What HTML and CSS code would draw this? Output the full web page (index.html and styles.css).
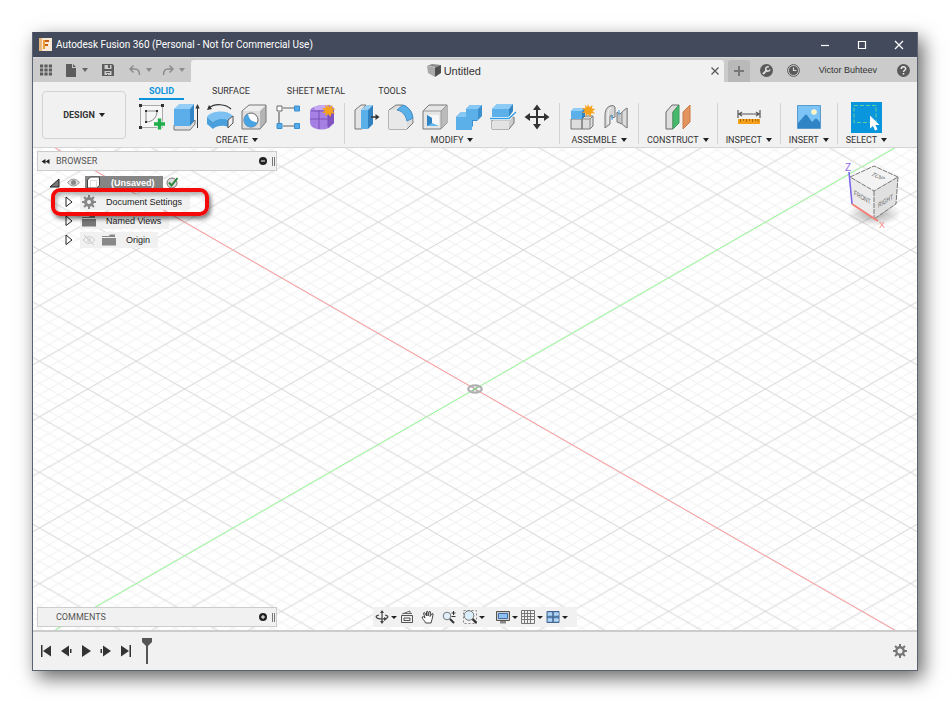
FILE: index.html
```html
<!DOCTYPE html>
<html lang="en">
<head>
<meta charset="utf-8">
<title>Autodesk Fusion 360</title>
<link rel="stylesheet" href="styles.css">
</head>
<body>
<div class="window">
  <header class="titlebar">
    <svg class="app-logo" width="13" height="13" viewBox="0 0 13 13"><path fill="#f8ead6" d="M0 0h13v13H0z"/><path fill="#e8b77c" d="M0 0h3v13H0z"/><path fill="#c8600f" d="M4 2h6v2H6v2h3v2H6v3H4z"/><path fill="#f09b3c" d="M4 2h2v9H4z"/></svg>
    <span class="app-title">Autodesk Fusion 360 (Personal - Not for Commercial Use)</span>
    <div class="window-buttons">
      <button aria-label="Minimize"><svg width="10" height="10" viewBox="0 0 10 10"><path d="M1 5.500h8" class="wb"/></svg></button>
      <button aria-label="Maximize"><svg width="10" height="10" viewBox="0 0 10 10"><path d="M1.500 1.500h7v7h-7z" class="wb"/></svg></button>
      <button aria-label="Close"><svg width="10" height="10" viewBox="0 0 10 10"><path d="M1 1l8 8M9 1l-8 8" class="wb"/></svg></button>
    </div>
  </header>

  <div class="tabbar">
    <div class="quick">
      <button aria-label="Data panel"><svg width="12" height="12" viewBox="0 0 12 12" fill="#5c5c5c"><path d="M0 .5h3.200v3H0zM4.400.5h3.200v3H4.400zM8.800.5H12v3H8.800zM0 4.500h3.200v3H0zM4.400 4.500h3.200v3H4.400zM8.800 4.500H12v3H8.800zM0 8.500h3.200v3H0zM4.400 8.500h3.200v3H4.400zM8.800 8.500H12v3H8.800z"/></svg></button>
      <button class="file" aria-label="File"><svg width="12" height="13" viewBox="0 0 12 13" fill="#5c5c5c"><path d="M1 0h6v4h4v9H1zM8 0l3 3H8z"/></svg><i class="caret grey"></i></button>
      <button class="save" aria-label="Save"><svg width="12" height="12" viewBox="0 0 12 12"><path fill="#5c5c5c" fill-rule="evenodd" d="M0 0h10.500L12 1.500V12H0zM2.500 1v4h7V1zM2.500 7v4h7V7z"/><path fill="#5c5c5c" d="M6 1h2v3H6zM4 8h4v1H4zM5 10h1v1H5z"/></svg></button>
      <button aria-label="Undo"><svg width="12" height="12" viewBox="0 0 12 12" fill="none" stroke="#8c8c8c" stroke-width="1.500"><path d="M4.500 1.500L1 5l3.500 3.500M1 5h5c3 0 4.500 1.500 4.500 6"/></svg><i class="caret pale"></i></button>
      <button aria-label="Redo"><svg width="12" height="12" viewBox="0 0 12 12" fill="none" stroke="#8c8c8c" stroke-width="1.500"><path d="M7.500 1.500L11 5 7.500 8.500M11 5H6C3 5 1.500 6.500 1.500 11"/></svg><i class="caret pale"></i></button>
    </div>
    <div class="doc-tab">
      <span class="doc-name"><svg width="14" height="13" viewBox="0 0 14 13"><path fill="#8b8b8b" d="M0 2l5-2 9 1-5 2z"/><path fill="#a9a9a9" d="M0 2l8 1.500V13L1 9z"/><path fill="#4e4e4e" d="M8 3.500L14 1v8l-6 4z"/></svg>Untitled</span>
      <button class="doc-close" aria-label="Close document"><svg width="8" height="8" viewBox="0 0 8 8"><path d="M.5.5l7 7M7.500.5l-7 7" stroke="#555" stroke-width="1.200"/></svg></button>
    </div>
    <div class="account">
      <button class="new-tab" aria-label="New tab"><svg width="12" height="12" viewBox="0 0 12 12"><path d="M6 1v10M1 6h10" stroke="#777" stroke-width="2"/></svg></button>
      <button aria-label="Extensions"><svg width="13" height="13" viewBox="0 0 13 13"><circle cx="6.500" cy="6.500" r="6.500" fill="#5a5a5a"/><path d="M3 10l4-4" stroke="#ddd" stroke-width="2"/><path d="M8.800 3A2.200 2.200 0 1 0 10 5.500" stroke="#ddd" stroke-width="1.500" fill="none"/></svg></button>
      <button aria-label="Job status"><svg width="13" height="13" viewBox="0 0 13 13"><circle cx="6.500" cy="6.500" r="5.900" fill="none" stroke="#5a5a5a"/><circle cx="6.500" cy="6.500" r="4.600" fill="#5a5a5a"/><path d="M6.500 3.500v3h3" stroke="#ddd" stroke-width="1.200" fill="none"/></svg></button>
      <button class="user">Victor Buhteev</button>
      <button aria-label="Help"><svg width="13" height="13" viewBox="0 0 13 13"><circle cx="6.500" cy="6.500" r="6.500" fill="#5a5a5a"/><path d="M4.300 5c0-3 4.400-2.800 4.400-.3 0 1.500-2.200 1.600-2.200 3.300M6.500 9v1.600" stroke="#eee" stroke-width="1.500" fill="none"/></svg></button>
    </div>
  </div>

  <div class="ribbon">
    <button class="workspace">DESIGN<i class="caret"></i></button>
    <div class="ribbon-main">
      <nav class="ribbon-tabs">
        <a href="#solid" class="active">SOLID</a>
        <a href="#surface" class="surface">SURFACE</a>
        <a href="#sheet">SHEET METAL</a>
        <a href="#tools">TOOLS</a>
      </nav>
      <div class="groups">
        <section class="group">
          <div class="tools">
            <button aria-label="Create sketch"><svg class="ic" viewBox="0 0 28 28"><path d="M2.500 2.500h22v22h-22z" fill="#f6f6f6" stroke="#aaa"/><path d="M8 8h11c0 6-4 11-11 11z" fill="none" stroke="#888"/><path fill="#333" d="M1 1h3v3H1zM23 1h3v3h-3zM1 23h3v3H1zM7 7h2v2H7zM18 7h2v2h-2zM7 18h2v2H7z"/><path d="M21.500 15.500v11M16 21h11" stroke="#f1f1f1" stroke-width="5"/><path d="M21.500 15.500v11M16 21h11" stroke="#1fae4b" stroke-width="3.400"/></svg></button>
            <button aria-label="Extrude"><svg class="ic" viewBox="0 0 28 28"><path d="M2 22h16l5-5v4l-5 6H2z" fill="#ddd" stroke="#777"/><path d="M2 6l5-5h15l-4 5z" fill="#94cdf6"/><path d="M2 6h16v17H2z" fill="#5baee9"/><path d="M18 6l4-5v17l-4 5z" fill="#3487c6"/><path d="M25.500 25V4" stroke="#333"/><path d="M23.300 5.500L25.500 1l2.200 4.500z" fill="#333"/></svg></button>
            <button aria-label="Revolve"><svg class="ic" viewBox="0 0 28 28"><path d="M3 5c6-5 17-4 22 1" fill="none" stroke="#333" stroke-width="1.200"/><path d="M1 7l2-5 3 4z" fill="#333"/><path d="M1 14c3-6 20-8 26-1l-5 4c-4-2-11-2-15 2z" fill="#7cc1f2"/><path d="M1 14l6 5v7l-6-5zM7 19c4-4 11-4 15-2v7c-4-2-11-2-15 2z" fill="#4a9fdd"/><path d="M22 17l5-4v7l-5 5z" fill="#eee" stroke="#555"/></svg></button>
            <button aria-label="Hole"><svg class="ic" viewBox="0 0 28 28"><path d="M2 8l7-6h17l-6 6z" fill="#eee"/><path d="M20 8l6-6v17l-6 7z" fill="#b5b5b5"/><path d="M2 8h18v18H2z" fill="#ddd"/><path d="M2 8l7-6h17v17l-6 7H2z" fill="none" stroke="#777"/><circle cx="11" cy="17" r="7" fill="#fff" stroke="#666"/><path d="M8 10.800a7 7 0 1 0 9.500 8.500Q9 19 8 10.800z" fill="#4aa3e2"/></svg></button>
            <button aria-label="Pattern"><svg class="ic" viewBox="0 0 28 28"><path d="M9 5h11M5 9v11M9 23h11" stroke="#666" stroke-width="1.200"/><path d="M3 3h5v5H3z" fill="#fff" stroke="#666"/><path fill="#55aceb" stroke="#3b8fcf" d="M20.500 3h5v5h-5zM3 20.500h5v5H3zM20.500 20.500h5v5h-5z"/></svg></button>
            <button aria-label="Create form"><svg class="ic" viewBox="0 0 28 28"><path d="M2 9q0-4 4-5l6-2h10l4 3v15l-5 5q-8 3-15 0-4-2-4-6z" fill="#a680e3"/><path d="M6 4.500L12 2h9l-3 5H7z" fill="#c5a7f2"/><path d="M20 9l6-3v14l-6 5z" fill="#8256c2"/><path d="M11 7v19M2 16h18l6-3M20 9v15M3 8h17" fill="none" stroke="#7a50b8"/><path fill="#f7a21b" d="M20 1l1.400 3.300L24.500 2l-.6 3.600L27.500 6l-3 2 2.500 2.600-3.600-.4L22.500 14 20 11l-2.600 2.500.1-3.700L14 10l2.700-2.500L14 5l3.500.2L17 1.800 19.200 4z"/></svg></button>
          </div>
          <button class="label">CREATE<i class="caret"></i></button>
        </section>
        <section class="group">
          <div class="tools">
            <button aria-label="Press pull"><svg class="ic" viewBox="0 0 28 28"><path d="M2 7l6-5h5L9 7v19H2z" fill="#e4e4e4" stroke="#777"/><path d="M8 7h7v19H8z" fill="#5cb0ea"/><path d="M8 7l6-5h6l-5 5z" fill="#95cff7"/><path d="M15 7l5-5v19l-5 5z" fill="#2f81c0"/><path d="M18 14h6" stroke="#333" stroke-width="1.500"/><path d="M22.500 11l4 3-4 3z" fill="#333"/></svg></button>
            <button aria-label="Fillet"><svg class="ic" viewBox="0 0 28 28"><path d="M2 7l7-5h6c8 2 11 8 11 18l-6 6H2z" fill="#ddd" stroke="#777"/><path d="M2 7h8c6 2 9 8 10 13v6H2z" fill="#e8e8e8"/><path d="M10 7l6-5c6 2 9 7 10 13l-6 3c-1-5-4-10-10-11z" fill="#5cb0ea" stroke="#3c8fcd"/></svg></button>
            <button aria-label="Shell"><svg class="ic" viewBox="0 0 28 28"><path d="M2 8l6-6h18v18l-6 6H2z" fill="#e5e5e5" stroke="#777"/><path d="M20 8l6-6v18l-6 6z" fill="#bbb"/><path d="M2 8h18v18M20 8l6-6" fill="none" stroke="#999"/><path d="M6 12h12v11H6z" fill="#f7f7f7"/><path d="M6 12l5 3v5l7 3H6z" fill="#62b5ed"/><path d="M6 12l5 3v5l-5 3z" fill="#2f82c0"/></svg></button>
            <button aria-label="Combine"><svg class="ic" viewBox="0 0 28 28"><path d="M1 14l5-5h5V6l4-4h12v11l-5 5h-4v5l-4 4H1z" fill="#3c90d0"/><path d="M1 14h10V6h12v11h-6v10H1z" fill="#5cb0ea"/><path d="M11 6l4-4h12l-4 4zM1 14l5-5h5v5z" fill="#88c8f4"/></svg></button>
            <button aria-label="Split body"><svg class="ic" viewBox="0 0 28 28"><path d="M3 17l4-3h18v6l-5 6H3z" fill="#ccc" stroke="#777"/><path d="M3 18h17v8H3z" fill="#e3e3e3"/><path d="M3 6l5-5h16l-4 5v8H3z" fill="#5cb0ea"/><path d="M3 6l5-5h16l-4 5z" fill="#8ccbf5"/><path d="M20 6l4-5v7l-4 6z" fill="#3487c6"/><path d="M1 15.500h19L27 9" fill="none" stroke="#fff" stroke-width="3"/><path d="M1 15.500h19L27 9" fill="none" stroke="#319be2" stroke-width="1.400"/></svg></button>
            <button aria-label="Move"><svg class="ic" viewBox="0 0 28 28"><path d="M14 5v18M5 14h18" stroke="#333" stroke-width="2"/><path fill="#333" d="M14 1.500l4 5.500h-8zM14 26.500l4-5.500h-8zM1.500 14L7 10v8zM26.500 14L21 10v8z"/></svg></button>
          </div>
          <button class="label">MODIFY<i class="caret"></i></button>
        </section>
        <section class="group">
          <div class="tools">
            <button aria-label="New component"><svg class="ic" viewBox="0 0 28 28"><path d="M3 16h11v10H3zM14 16l3-3h8v10l-3 3h-8z" fill="#ddd" stroke="#777"/><path d="M14 16h8v10M22 16l3-3" fill="none" stroke="#888"/><path d="M3 8l3-3h11l-3 3v8H3z" fill="#5cb0ea"/><path d="M3 8l3-3h11l-3 3z" fill="#91cdf6"/><path d="M14 8l3-3v8l-3 3z" fill="#3487c6"/><path fill="#f7a21b" d="M20 1l1.400 3.300L24.500 2l-.6 3.600L27.500 6l-3 2 2.500 2.600-3.600-.4L22.500 14 20 11l-2.600 2.500.1-3.700L14 10l2.700-2.500L14 5l3.500.2L17 1.800 19.200 4z"/></svg></button>
            <button aria-label="Joint"><svg class="ic" viewBox="0 0 28 28"><path d="M3 13c0-6 2-9 5-10l3-.5 2 1.500v10l-3 1v-3l-2 1v8l-5 4z" fill="#d5d5d5" stroke="#777"/><path d="M6 21V11c0-3 1-5 3-6" fill="none" stroke="#fff"/><path d="M15 9l3 2 2-2 5-4v20l-5-4-5-2z" fill="#c5c5c5" stroke="#777"/><path d="M20 9l5-4v20l-5-4z" fill="#ddd" stroke="#888"/><path d="M10 12v5M17 7v5" stroke="#3fa9ee"/></svg></button>
          </div>
          <button class="label">ASSEMBLE<i class="caret"></i></button>
        </section>
        <section class="group">
          <div class="tools"><button aria-label="Construct"><svg class="ic" viewBox="0 0 28 28"><path d="M2 9l6-7h7l-6 7v17H2z" fill="#ddd" stroke="#666"/><path d="M9 9l6-7v18l-6 6z" fill="#47b96c" stroke="#3c9b5b"/><path d="M19 9l7-7v17l-7 7z" fill="#e3935d" stroke="#ca7b46"/></svg></button></div>
          <button class="label">CONSTRUCT<i class="caret"></i></button>
        </section>
        <section class="group">
          <div class="tools"><button aria-label="Measure"><svg class="ic" viewBox="0 0 28 28"><path d="M3 7v8M25 7v8M4 11h20M7 9l-3 2 3 2M21 9l3 2-3 2" fill="none" stroke="#555" stroke-width="1.200"/><path d="M3 16h22v5H3z" fill="#f6a01a"/><path d="M5.500 16v3M8.500 16v2M11.500 16v3M14.500 16v2M17.500 16v3M20.500 16v2M23 16v3" stroke="#a86a00"/></svg></button></div>
          <button class="label">INSPECT<i class="caret"></i></button>
        </section>
        <section class="group">
          <div class="tools"><button aria-label="Insert image"><svg class="ic" viewBox="0 0 28 28"><path d="M2.500 2.500h23v23h-23z" fill="#7cc3f6" stroke="#5a9bcd"/><circle cx="19" cy="9" r="2.800" fill="#fff5c8"/><path d="M3 20l7-8q1-1 2 0l5 7 3-3q1-1 2 0l3 3v6H3z" fill="#2f84c6"/></svg></button></div>
          <button class="label">INSERT<i class="caret"></i></button>
        </section>
        <section class="group">
          <div class="tools"><button class="selected" aria-label="Select"><svg width="31" height="31" viewBox="0 0 31 31"><path d="M3 3.500h22v17H3z" fill="none" stroke="#61cfa0" stroke-dasharray="4 2"/><path fill="#fff" d="M19 13.500v13l3-2.500 2 4.500 2.500-1-2-4.500h4z"/></svg></button></div>
          <button class="label">SELECT<i class="caret"></i></button>
        </section>
      </div>
    </div>
  </div>

  <main class="canvas">
    <svg class="grid" width="100%" height="100%" aria-hidden="true">
      <defs>
        <pattern id="iso" width="96.800" height="55.600" patternUnits="userSpaceOnUse">
          <path fill="none" stroke="#f1f1f1" d="M0-44.480l96.800 55.600M0-33.360l96.800 55.600M0-22.240l96.800 55.600M0-11.120l96.800 55.600M0 11.120l96.800 55.600M0 22.240l96.800 55.600M0 33.360l96.800 55.600M0 44.480l96.800 55.600M0 11.120l96.800-55.600M0 22.240l96.800-55.600M0 33.360l96.800-55.600M0 44.480l96.800-55.600M0 66.720l96.800-55.600M0 77.840l96.800-55.600M0 88.960l96.800-55.600M0 100.080l96.800-55.600"/>
          <path fill="none" stroke="#d5d5d5" d="M-96.800-55.600l290.400 166.800M-96.800 111.200L193.600-55.600M-10 5.740L10-5.740M86.800 61.340l20-11.480M86.800-5.740l20 11.480M-10 49.860l20 11.480"/>
        </pattern>
      </defs>
      <svg x="50%" y="50%" overflow="visible">
        <rect x="-1936" y="-1112" width="3872" height="2224" fill="url(#iso)"/>
        <path d="M-1936-1112L1936 1112" stroke="#ff9c9c"/>
        <path d="M-1936 1112L1936-1112" stroke="#98ff98"/>
        <ellipse rx="6.800" ry="3.600" fill="none" stroke="#b0b0b0" stroke-width="2.200"/>
        <path d="M-3-2.500L3 2.500M-3 2.500L3-2.500" stroke="#b0b0b0" stroke-width="1.600"/>
        <path d="M-3 1.700L3-1.700" stroke="#7fdc7f"/>
      </svg>
    </svg>

    <div class="panel">
      <button aria-label="Collapse"><svg width="9" height="7" viewBox="0 0 9 7"><path d="M4.500 1v5L.5 3.500zM8.500 1v5l-4-2.500z" fill="#222"/></svg></button>
      <span class="panel-title">BROWSER</span>
      <button class="round" aria-label="Hide"><svg width="8" height="8" viewBox="0 0 8 8"><circle cx="4" cy="4" r="4" fill="#222"/><path d="M2 4h4" stroke="#fff"/></svg></button>
      <i class="grip"></i>
    </div>

    <ul class="tree">
      <li class="row root">
        <svg width="11" height="10" viewBox="0 0 11 10"><path d="M10 1v8H1z" fill="#777" stroke="#222"/></svg>
        <svg class="eye" width="13" height="9" viewBox="0 0 13 9"><path d="M.5 4.500q6-7 12 0-6 7-12 0z" fill="#ddd" stroke="#999"/><circle cx="6.500" cy="4.500" r="2.500" fill="#888"/></svg>
        <span class="doc"><svg width="16" height="13" viewBox="0 0 16 13"><path d="M2.500 12V4l3-3h9v8.500l-3 2.500z" fill="#fff" stroke="#444"/><path d="M5.500 11V4.500h6V11M11.500 4.500L14 2" fill="none" stroke="#ddd"/></svg>(Unsaved)</span>
        <svg class="ok" width="13" height="13" viewBox="0 0 13 13"><circle cx="6" cy="7" r="5" fill="#ddd" stroke="#777"/><path d="M3 6.500L5.500 9.500 11.500 2" stroke="#27853b" stroke-width="2" fill="none"/></svg>
      </li>
      <li class="row child"><svg class="twist" width="8" height="12" viewBox="0 0 8 12"><path d="M1 1v9.500L7 6z" fill="#fff" stroke="#222"/></svg><span class="cell"><svg width="14" height="14" viewBox="0 0 14 14"><circle cx="7" cy="7" r="3.500" fill="none" stroke="#888" stroke-width="3"/><path d="M7 0v3M7 11v3M0 7h3M11 7h3M2.050 2.050l2 2M9.950 9.950l2 2M11.950 2.050l-2 2M4.050 9.950l-2 2" stroke="#888" stroke-width="2"/></svg><span>Document Settings</span></span></li>
      <li class="row child"><svg class="twist" width="8" height="12" viewBox="0 0 8 12"><path d="M1 1v9.500L7 6z" fill="#fff" stroke="#222"/></svg><span class="cell"><svg width="14" height="14" viewBox="0 0 14 14"><path d="M0 3h7l1-1.500h5V4H0zM0 5h14v7.500H0z" fill="#777"/></svg><span>Named Views</span></span></li>
      <li class="row child"><svg class="twist" width="8" height="12" viewBox="0 0 8 12"><path d="M1 1v9.500L7 6z" fill="#fff" stroke="#222"/></svg><span class="cell"><svg width="14" height="14" viewBox="0 0 14 14"><path d="M1 7q6-7 12 0-6 7-12 0zM2 2l10 10" fill="none" stroke="#ccc"/><circle cx="7" cy="7" r="2" fill="#d5d5d5"/></svg><svg class="second" width="14" height="14" viewBox="0 0 14 14"><path d="M0 3h7l1-1.500h5V4H0zM0 5h14v7.500H0z" fill="#888"/></svg><span>Origin</span></span></li>
    </ul>
    <div class="callout"></div>

    <svg class="cube" width="64" height="72" viewBox="0 0 64 72" font-family="Liberation Sans, sans-serif">
      <defs><radialGradient id="shade"><stop offset="0" stop-color="#000" stop-opacity=".35"/><stop offset="1" stop-color="#000" stop-opacity="0"/></radialGradient></defs>
      <ellipse cx="31" cy="54" rx="27" ry="12" fill="url(#shade)"/>
      <path d="M7 17L31 6l24 11-24 14z" fill="#f3f3f3"/><path d="M7 17l24 14v28L9 44z" fill="#ebebeb"/><path d="M31 31l24-14-2 27-22 15z" fill="#e0e0e0"/>
      <path d="M7 17L31 6l24 11-24 14zM31 31v28M55 17l-2 27-22 15" fill="none" stroke="#777" stroke-dasharray="5 1"/>
      <path d="M6 12l3 32" stroke="#7a68e8" stroke-width="1.600"/><path d="M9 44l26 17" stroke="#f77b72" stroke-width="1.600"/>
      <text x="2" y="11" font-size="10" fill="#8c6be8">Z</text><text x="36" y="68" font-size="9" fill="#f78a80">X</text>
      <g font-size="6" fill="#666"><text transform="matrix(.8 .46 0 1.200 11 35)">FRONT</text><text transform="matrix(.8 -.5 0 1.200 35 48)">RIGHT</text><text transform="matrix(1 .45 -.9 .6 27 15)">TOP</text></g>
    </svg>

    <div class="canvas-foot">
      <div class="panel comments">
        <span class="panel-title">COMMENTS</span>
        <button class="round" aria-label="Add comment"><svg width="8" height="8" viewBox="0 0 8 8"><circle cx="4" cy="4" r="4" fill="#222"/><path d="M2 4h4M4 2v4" stroke="#fff"/></svg></button>
        <i class="grip"></i>
      </div>
      <div class="navbar">
        <button aria-label="Orbit"><svg width="14" height="14" viewBox="0 0 14 14"><path d="M7 1v12M10 5c5 1 3 4-3 4S-1 6 4 5" fill="none" stroke="#444" stroke-width="1.200"/><path d="M7 0l2 3H5zM7 14l2-3H5z" fill="#444"/><path d="M9 7l3 2-3 2z" fill="#444"/></svg><i class="caret"></i></button>
        <button aria-label="Look at"><svg width="14" height="14" viewBox="0 0 14 14"><path d="M1.500 5.500h11v7h-11zM4 8h6v2.500H4z" fill="#eee" stroke="#555"/><path d="M2 4l8-3v3M3 3.500h9" fill="none" stroke="#666"/></svg></button>
        <button aria-label="Pan"><svg width="14" height="14" viewBox="0 0 14 14"><path d="M4.500 13C4 10.500 1 9 1 7q1.500-1 3 1L2.500 3Q3 2 4 3l1.500 3V2q1-2 1.500 0v4l1-4q1-1.500 1.500 0L9 6.500 11 3.500q1.500 0 1 1.500L11 9.500l-1 3.500z" fill="#fff" stroke="#444"/></svg></button>
        <button aria-label="Zoom"><svg width="14" height="14" viewBox="0 0 14 14"><circle cx="5" cy="6" r="3.800" fill="#e0effa" stroke="#777"/><path d="M8 9l4 4" stroke="#333" stroke-width="2"/><path d="M9.500 3h4M11.500 1v4M9.500 6.500h4" stroke="#333"/></svg></button>
        <button aria-label="Fit"><svg width="14" height="14" viewBox="0 0 14 14"><path d="M.5.500h13v13H.5z" fill="none" stroke="#888" stroke-dasharray="2 2"/><circle cx="6" cy="5.500" r="4.800" fill="#dceefa" stroke="#777"/><path d="M9.500 9l4 4" stroke="#333" stroke-width="2.400"/></svg><i class="caret"></i></button>
        <button class="display" aria-label="Display settings"><svg width="14" height="14" viewBox="0 0 14 14"><path d="M.5 1.500h13v9H.5z" fill="#ccc" stroke="#555"/><path d="M2.500 3.500h9v5h-9z" fill="#8fc0ee" stroke="#3e6fae"/><path d="M4 11h6v2.500H4z" fill="#888"/></svg><i class="caret"></i></button>
        <button aria-label="Grid and snaps"><svg width="14" height="14" viewBox="0 0 14 14"><path d="M.5.500h13v13H.5zM.5 3.500h13M.5 6.500h13M.5 9.500h13M3.500.500v13M6.500.500v13M9.500.500v13" fill="none" stroke="#777"/></svg><i class="caret"></i></button>
        <button aria-label="Viewports"><svg width="14" height="14" viewBox="0 0 14 14"><path d="M1 1.500h12v11H1z" fill="#8fbdea" stroke="#45658e"/><path d="M7 1.500v11M1 7h12" stroke="#45658e" stroke-width="1.500"/><path d="M2 4h4M8 4h5M2 10h4M8 10h5" stroke="#d4e7f8"/></svg><i class="caret"></i></button>
      </div>
    </div>
  </main>

  <footer class="timeline">
    <button aria-label="Go to start"><svg width="12" height="12" viewBox="0 0 12 12" fill="#333"><path d="M1 0h1.500v12H1zM11 .5v11L3 6z"/></svg></button>
    <button aria-label="Step back"><svg width="12" height="12" viewBox="0 0 12 12" fill="#333"><path d="M9 .5v11L1 6zM10 4h1.500v4H10z"/></svg></button>
    <button aria-label="Play"><svg width="12" height="12" viewBox="0 0 12 12" fill="#333"><path d="M2 0v12l9-6z"/></svg></button>
    <button aria-label="Step forward"><svg width="12" height="12" viewBox="0 0 12 12" fill="#333"><path d="M3 .5v11L11 6zM.5 4H2v4H.5z"/></svg></button>
    <button aria-label="Go to end"><svg width="12" height="12" viewBox="0 0 12 12" fill="#333"><path d="M1 .5v11L9 6zM9.500 0H11v12H9.500z"/></svg></button>
    <svg class="marker" width="10" height="26" viewBox="0 0 10 26"><path d="M0 0h10v4L6 8v18H4V8L0 4z" fill="#555"/></svg>
    <button class="prefs" aria-label="Preferences"><svg width="14" height="14" viewBox="0 0 14 14"><circle cx="7" cy="7" r="3.700" fill="none" stroke="#777" stroke-width="2.400"/><path d="M7 0v3M7 11v3M0 7h3M11 7h3M2.050 2.050l2 2M9.950 9.950l2 2M11.950 2.050l-2 2M4.050 9.950l-2 2" stroke="#777" stroke-width="2"/></svg></button>
  </footer>
</div>
</body>
</html>
```
FILE: styles.css
```css
* { box-sizing: border-box; }

body {
  margin: 0;
  min-height: 100vh;
  padding: 32px;
  display: flex;
  background: #fff;
  color: #333;
  font: 9px/12px Roboto, sans-serif;
}

button {
  display: flex;
  align-items: center;
  justify-content: center;
  padding: 0;
  border: 0;
  background: none;
  color: inherit;
  font: inherit;
}

svg { display: block; flex: none; }

.caret {
  margin-left: 4px;
  border: solid transparent;
  border-width: 4px 3px 0;
  border-top-color: #222;
}
.caret.grey { border-top-color: #666; }
.caret.pale { border-top-color: #8c8c8c; }

.window {
  flex: 1;
  min-width: 0;
  display: flex;
  flex-direction: column;
  border: 1px solid #5b6272;
  border-top: 0;
  background: #f1f1f1;
  box-shadow: 5px 7px 18px rgba(0, 0, 0, .6);
}

.titlebar {
  display: flex;
  align-items: center;
  height: 25px;
  padding-left: 6px;
  background: #434a5b;
  color: #fff;
}
.app-title { margin-left: 4px; font-size: 10px; }
.window-buttons { display: flex; margin-left: auto; }
.window-buttons button { width: 37px; height: 25px; }
.wb { fill: none; stroke: #fff; stroke-width: 1.2; }

.tabbar {
  display: flex;
  height: 25px;
  background: #cbcbcb;
  border-top: 1px solid #d8d8d8;
}
.quick {
  display: flex;
  align-items: center;
  width: 158px;
  padding-left: 7px;
}
.quick .file { margin-left: 13px; }
.quick .save { margin: 0 15px 0 14px; }
.quick button + button:last-child { margin-left: 10px; }
.quick .caret { margin-left: 5px; }

.doc-tab {
  flex: 1;
  display: flex;
  align-items: center;
  margin-top: 2px;
  padding-right: 5px;
  border-radius: 3px 3px 0 0;
  background: #f1f1f1;
}
.doc-name {
  flex: 1;
  display: flex;
  justify-content: center;
  gap: 3px;
  padding-left: 6px;
  font: 11px/14px "Liberation Sans", sans-serif;
}
.account { display: flex; align-items: center; gap: 14px; padding: 0 7px 0 4px; }
.account .new-tab {
  width: 22px;
  height: 22px;
  margin: 2px -4px 0 0;
  border-radius: 3px 3px 0 0;
  background: #b9b9b9;
}
.user { margin: 0 6px 0 5px; font: 9px/12px "Liberation Sans", sans-serif; }

.ribbon {
  display: flex;
  height: 66px;
  padding: 0 9px;
  border-bottom: 1px solid #d5d5d5;
}
.workspace {
  flex: none;
  width: 84px;
  height: 48px;
  margin: 9px 4px 0 0;
  border: 1px solid #d2d2d2;
  border-radius: 4px;
  font-weight: bold;
}
.ribbon-tabs { display: flex; height: 18px; gap: 28px; padding: 3px 0 0 9px; }
.ribbon-tabs a { color: #333; text-decoration: none; }
.ribbon-tabs .active {
  padding: 0 10px 1px;
  border-bottom: 2px solid #0a93dc;
  color: #0a93dc;
  font-weight: bold;
}
.ribbon-tabs .surface { margin-right: 9px; }
.ribbon-tabs a:last-child { margin-left: 5px; }
.groups { display: flex; margin-top: 3px; }
.group {
  display: flex;
  flex-direction: column;
  align-items: center;
  height: 41px;
  padding: 0 8px;
  border-right: 1px solid #d4d4d4;
}
.group:last-child { border-right: 0; }
.tools { display: flex; align-items: center; gap: 6px; height: 28px; }
.ic { width: 28px; height: 28px; }
.label { margin-top: 3px; }
.selected { background: #0a96dc; }

.canvas {
  position: relative;
  flex: 1;
  display: flex;
  flex-direction: column;
  min-height: 0;
  padding: 3px 4px;
  overflow: hidden;
  background: #fff;
}
.canvas > * { position: relative; }
.canvas > .grid { position: absolute; inset: 0; }

.panel {
  display: flex;
  align-items: center;
  width: 240px;
  height: 20px;
  padding: 0 1px 0 3px;
  border: 1px solid #ccc;
  background: #f1f1f1;
  color: #555;
}
.panel-title { margin-left: 6px; }
.round { margin: 0 5px 0 auto; }
.grip { width: 3px; height: 9px; border: solid #777; border-width: 0 1px; }
.comments { padding-left: 12px; }

.tree {
  margin: 2px 0 0;
  padding: 0 0 0 12px;
  list-style: none;
  font: 9px/12px "Liberation Sans", sans-serif;
  color: #222;
}
.row { display: flex; align-items: center; height: 19px; }
.eye { margin: 0 5px 0 7px; }
.doc {
  display: flex;
  align-items: center;
  gap: 10px;
  height: 13px;
  padding-right: 8px;
  background: #858585;
  color: #fff;
  font-weight: bold;
}
.ok { margin-left: 3px; }
.child { padding-left: 16px; }
.cell {
  display: flex;
  align-items: center;
  gap: 10px;
  height: 16px;
  margin-left: 7px;
  padding: 0 8px 0 2px;
  background: rgba(240, 240, 240, .9);
}
.second { margin-left: -4px; }

.canvas > .callout {
  position: absolute;
  top: 40px;
  left: 18px;
  width: 158px;
  height: 28px;
  border: 4px solid #f50a0a;
  border-radius: 9px;
  box-shadow: 2px 3px 4px rgba(0, 0, 0, .5), inset 2px 3px 4px rgba(0, 0, 0, .3);
}
.canvas > .cube { position: absolute; top: 12px; right: 10px; }

.canvas-foot { display: flex; gap: 96px; margin-top: auto; }
.navbar {
  display: flex;
  align-items: center;
  gap: 7px;
  height: 20px;
  padding: 0 9px 0 2px;
  background: #f1f1f1;
}
.navbar .caret { margin-left: 2px; border-width: 3px 3px 0; }
.navbar button:nth-child(n+7) { margin-left: -4px; }
.navbar button:first-child { margin-right: -4px; }
.navbar .display { margin-left: 4px; }

.timeline {
  display: flex;
  align-items: center;
  gap: 8px;
  height: 40px;
  padding: 0 10px 0 7px;
  border-top: 2px solid #ccc;
}
.timeline .marker { margin-left: 2px; }
.timeline .prefs { margin-left: auto; }
```
